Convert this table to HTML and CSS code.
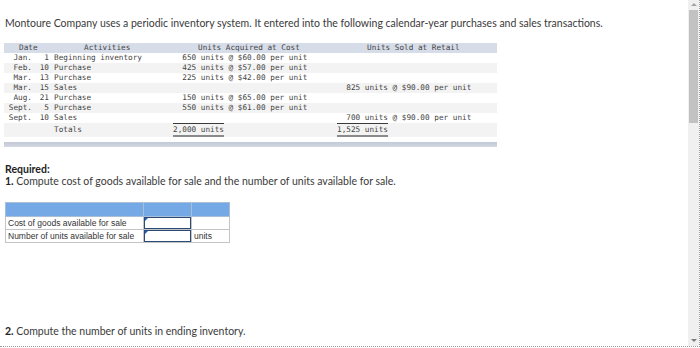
FILE: index.html
```html
<!DOCTYPE html>
<html>
<head>
<meta charset="utf-8">
<link rel="stylesheet" href="styles.css">
</head>
<body>
<div class="page">
  <div class="main">
    <p class="intro">Montoure Company uses a periodic inventory system. It entered into the following calendar-year purchases and sales transactions.</p>
    <div class="inv">
      <div class="row hdr"><span class="h-date">Date</span><span class="h-act">Activities</span><span class="h-acq">Units Acquired at Cost</span><span class="h-sold">Units Sold at Retail</span></div>
      <div class="row"><span class="mon">Jan.</span><span class="day">1</span><span class="act">Beginning inventory</span><span class="qty">650 units</span><span class="sfx">@ $60.00 per unit</span><span class="qty"></span><span class="sfx"></span></div>
      <div class="row shade"><span class="mon">Feb.</span><span class="day">10</span><span class="act">Purchase</span><span class="qty">425 units</span><span class="sfx">@ $57.00 per unit</span><span class="qty"></span><span class="sfx"></span></div>
      <div class="row"><span class="mon">Mar.</span><span class="day">13</span><span class="act">Purchase</span><span class="qty">225 units</span><span class="sfx">@ $42.00 per unit</span><span class="qty"></span><span class="sfx"></span></div>
      <div class="row shade"><span class="mon">Mar.</span><span class="day">15</span><span class="act">Sales</span><span class="qty"></span><span class="sfx"></span><span class="qty">825 units</span><span class="sfx">@ $90.00 per unit</span></div>
      <div class="row"><span class="mon">Aug.</span><span class="day">21</span><span class="act">Purchase</span><span class="qty">150 units</span><span class="sfx">@ $65.00 per unit</span><span class="qty"></span><span class="sfx"></span></div>
      <div class="row shade"><span class="mon">Sept.</span><span class="day">5</span><span class="act">Purchase</span><span class="qty">550 units</span><span class="sfx">@ $61.00 per unit</span><span class="qty"></span><span class="sfx"></span></div>
      <div class="row"><span class="mon">Sept.</span><span class="day">10</span><span class="act">Sales</span><span class="qty"></span><span class="sfx"></span><span class="qty">700 units</span><span class="sfx">@ $90.00 per unit</span></div>
      <div class="row shade tot"><span class="mon"></span><span class="day"></span><span class="act">Totals</span><span class="qty"><span class="tline">2,000 units</span></span><span class="sfx"></span><span class="qty"><span class="tline">1,525 units</span></span><span class="sfx"></span></div>
      <div class="bar"></div>
    </div>
    <p class="req"><b>Required:</b></p>
    <p class="task"><b>1.</b> Compute cost of goods available for sale and the number of units available for sale.</p>
    <table class="ans">
      <tr class="ans-hdr"><td class="c-lbl"></td><td class="c-in"></td><td class="c-unit"></td></tr>
      <tr><td class="c-lbl">Cost of goods available for sale</td><td class="c-in"><div class="inp"></div></td><td class="c-unit"></td></tr>
      <tr><td class="c-lbl">Number of units available for sale</td><td class="c-in"><div class="inp"></div></td><td class="c-unit">units</td></tr>
    </table>
    <p class="task2"><b>2.</b> Compute the number of units in ending inventory.</p>
  </div>
  <div class="scroll">
    <div class="up"></div>
    <div class="thumb"></div>
    <div class="fill"></div>
    <div class="down"></div>
  </div>
</div>
</body>
</html>
```

FILE: styles.css
```css
* { box-sizing: border-box; }
html, body { margin: 0; padding: 0; background: #fff; }
body { font-family: Lato, "Open Sans", sans-serif; color: #333; }

.page {
  width: 700px;
  height: 347px;
  display: flex;
  border-right: 1px dotted #9a9a9a;
  border-bottom: 1px dotted #9a9a9a;
  overflow: hidden;
}
.main { flex: 1; padding-top: 16px; }

.intro { margin: 0 0 0 5px; font-size: 10.5px; line-height: 14px; color: #3a3a3a; }

.inv {
  margin: 13px 0 0 4px;
  width: 493px;
  font-family: "DejaVu Sans Mono", "Liberation Mono", monospace;
  font-size: 7.7px;
  color: #444;
}
.row {
  display: grid;
  grid-template-columns: 28px 17px 124px 51px 113px 51px 109px;
  height: 10px;
  line-height: 10px;
  white-space: pre;
}
.shade { background: #f3f3f3; }
.hdr { background: #d6dce8; }
.h-date { grid-column: 1 / 3; padding-left: 15px; }
.h-act { grid-column: 3; padding-left: 35px; }
.h-acq { grid-column: 4 / 6; padding-left: 25px; }
.h-sold { grid-column: 6 / 8; padding-left: 30px; }
.mon, .day, .qty { text-align: right; }
.act { padding-left: 5px; }
.sfx { padding-left: 4.6px; }

.tot { height: 14px; line-height: 11px; }
.tline {
  display: block;
  border-top: 1px solid #3a3a3a;
  border-bottom: 2px solid #8a8a8a;
}
.tot .act { padding-top: 1px; }

.bar {
  margin-top: 5px;
  height: 5px;
  background: linear-gradient(#c3c9d5, #d3d8e2);
}

.req { margin: 16px 0 0 5px; font-size: 10.5px; line-height: 12px; color: #222; }
.task { margin: 0 0 0 5px; font-size: 10.5px; line-height: 12px; color: #3a3a3a; }
.task b { color: #222; }

.ans {
  margin: 15px 0 0 5px;
  border-collapse: collapse;
  font-family: "Liberation Sans", Arial, sans-serif;
  font-size: 8.5px;
  color: #333;
}
.ans td {
  border: 1px solid #c4c4c4;
  height: 13px;
  padding: 0 0 0 2px;
  line-height: 11px;
}
.ans-hdr td { background: #74a9e6; border-color: #a9bfd8; height: 14px; }
.c-lbl { width: 138px; }
.c-in { width: 48px; padding: 0 !important; }
.c-unit { width: 38px; }
.inp {
  position: relative;
  height: 12px;
  border: 1px solid #2c4a76;
  background: #fff;
}
.inp::before {
  content: "";
  position: absolute;
  left: 0;
  top: 0;
  border-top: 3px solid #1d5fc7;
  border-right: 3px solid transparent;
}

.task2 { margin: 82px 0 0 5px; font-size: 10.5px; line-height: 12px; color: #3a3a3a; }
.task2 b { color: #222; }

.scroll {
  width: 11px;
  background: #f0f0f0;
  display: flex;
  flex-direction: column;
  align-items: center;
}
.up {
  margin-top: 3px;
  width: 0; height: 0;
  border-left: 3px solid transparent;
  border-right: 3px solid transparent;
  border-bottom: 3px solid #a3a3a3;
}
.thumb {
  margin-top: 4px;
  width: 9px;
  height: 113px;
  background: #c2c2c2;
}
.fill { flex: 1; }
.down {
  margin-bottom: 4px;
  width: 0; height: 0;
  border-left: 3px solid transparent;
  border-right: 3px solid transparent;
  border-top: 3px solid #7a7a7a;
}
```
